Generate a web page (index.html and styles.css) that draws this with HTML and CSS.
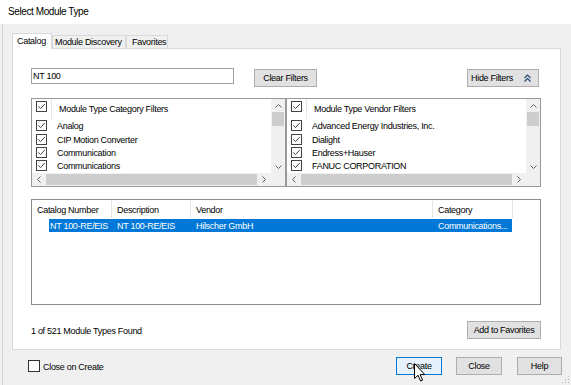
FILE: index.html
```html
<!DOCTYPE html>
<html lang="en">
<head>
    <meta charset="UTF-8">
    <title>Select Module Type</title>
    <link rel="stylesheet" href="styles.css">
</head>
<body>
    <div class="titlebar">Select Module Type</div>
    <div class="client">
        <div class="tabs">
            <div class="tab tab-catalog active">Catalog</div>
            <div class="tab tab-discovery">Module Discovery</div>
            <div class="tab tab-favorites">Favorites</div>
        </div>

        <div class="panel">
            <div class="search-row">
                <input class="search" type="text" value="NT 100">
                <button class="btn btn-clear">Clear Filters</button>
                <button class="btn btn-hide">Hide Filters
                    <svg class="hide-icon" width="7" height="8" viewBox="0 0 7 8"><path d="M0.5 4L3.5 1L6.5 4M0.5 7.5L3.5 4.5L6.5 7.5" fill="none" stroke="#27487a" stroke-width="1.2"/></svg>
                </button>
            </div>

            <div class="filters">
                <div class="filter-box">
                    <div class="filter-main">
                        <div class="filter-list">
                            <div class="filter-head">
                                <svg class="chk head-chk" viewBox="0 0 11 11"><rect x=".5" y=".5" width="10" height="10" fill="#fff" stroke="#444"/><path d="M2.3 5.3L4.5 7.6L8.8 3" fill="none" stroke="#444"/></svg>
                                <span class="sep"></span>
                                <span class="head-label">Module Type Category Filters</span>
                            </div>
                            <div class="filter-item"><svg class="chk" viewBox="0 0 11 11"><rect x=".5" y=".5" width="10" height="10" fill="#fff" stroke="#444"/><path d="M2.3 5.3L4.5 7.6L8.8 3" fill="none" stroke="#444"/></svg><span class="item-label">Analog</span></div>
                            <div class="filter-item"><svg class="chk" viewBox="0 0 11 11"><rect x=".5" y=".5" width="10" height="10" fill="#fff" stroke="#444"/><path d="M2.3 5.3L4.5 7.6L8.8 3" fill="none" stroke="#444"/></svg><span class="item-label">CIP Motion Converter</span></div>
                            <div class="filter-item"><svg class="chk" viewBox="0 0 11 11"><rect x=".5" y=".5" width="10" height="10" fill="#fff" stroke="#444"/><path d="M2.3 5.3L4.5 7.6L8.8 3" fill="none" stroke="#444"/></svg><span class="item-label">Communication</span></div>
                            <div class="filter-item"><svg class="chk" viewBox="0 0 11 11"><rect x=".5" y=".5" width="10" height="10" fill="#fff" stroke="#444"/><path d="M2.3 5.3L4.5 7.6L8.8 3" fill="none" stroke="#444"/></svg><span class="item-label">Communications</span></div>
                        </div>
                        <div class="vscroll">
                            <div class="arrow-btn"><svg width="7" height="4" viewBox="0 0 7 4"><path d="M0.5 3.5L3.5 0.5L6.5 3.5" fill="none" stroke="#606060"/></svg></div>
                            <div class="vthumb"></div>
                            <div class="track"></div>
                            <div class="arrow-btn"><svg width="7" height="4" viewBox="0 0 7 4"><path d="M0.5 0.5L3.5 3.5L6.5 0.5" fill="none" stroke="#606060"/></svg></div>
                        </div>
                    </div>
                    <div class="hscroll">
                        <div class="harrow"><svg width="4" height="7" viewBox="0 0 4 7"><path d="M3.5 0.5L0.5 3.5L3.5 6.5" fill="none" stroke="#606060"/></svg></div>
                        <div class="hthumb"></div>
                        <div class="harrow"><svg width="4" height="7" viewBox="0 0 4 7"><path d="M0.5 0.5L3.5 3.5L0.5 6.5" fill="none" stroke="#606060"/></svg></div>
                        <div class="corner"></div>
                    </div>
                </div>

                <div class="filter-box">
                    <div class="filter-main">
                        <div class="filter-list">
                            <div class="filter-head">
                                <svg class="chk head-chk" viewBox="0 0 11 11"><rect x=".5" y=".5" width="10" height="10" fill="#fff" stroke="#444"/><path d="M2.3 5.3L4.5 7.6L8.8 3" fill="none" stroke="#444"/></svg>
                                <span class="sep"></span>
                                <span class="head-label">Module Type Vendor Filters</span>
                            </div>
                            <div class="filter-item"><svg class="chk" viewBox="0 0 11 11"><rect x=".5" y=".5" width="10" height="10" fill="#fff" stroke="#444"/><path d="M2.3 5.3L4.5 7.6L8.8 3" fill="none" stroke="#444"/></svg><span class="item-label">Advanced Energy Industries, Inc.</span></div>
                            <div class="filter-item"><svg class="chk" viewBox="0 0 11 11"><rect x=".5" y=".5" width="10" height="10" fill="#fff" stroke="#444"/><path d="M2.3 5.3L4.5 7.6L8.8 3" fill="none" stroke="#444"/></svg><span class="item-label">Dialight</span></div>
                            <div class="filter-item"><svg class="chk" viewBox="0 0 11 11"><rect x=".5" y=".5" width="10" height="10" fill="#fff" stroke="#444"/><path d="M2.3 5.3L4.5 7.6L8.8 3" fill="none" stroke="#444"/></svg><span class="item-label">Endress+Hauser</span></div>
                            <div class="filter-item"><svg class="chk" viewBox="0 0 11 11"><rect x=".5" y=".5" width="10" height="10" fill="#fff" stroke="#444"/><path d="M2.3 5.3L4.5 7.6L8.8 3" fill="none" stroke="#444"/></svg><span class="item-label">FANUC CORPORATION</span></div>
                        </div>
                        <div class="vscroll">
                            <div class="arrow-btn"><svg width="7" height="4" viewBox="0 0 7 4"><path d="M0.5 3.5L3.5 0.5L6.5 3.5" fill="none" stroke="#606060"/></svg></div>
                            <div class="vthumb"></div>
                            <div class="track"></div>
                            <div class="arrow-btn"><svg width="7" height="4" viewBox="0 0 7 4"><path d="M0.5 0.5L3.5 3.5L6.5 0.5" fill="none" stroke="#606060"/></svg></div>
                        </div>
                    </div>
                    <div class="hscroll">
                        <div class="harrow"><svg width="4" height="7" viewBox="0 0 4 7"><path d="M3.5 0.5L0.5 3.5L3.5 6.5" fill="none" stroke="#606060"/></svg></div>
                        <div class="hthumb"></div>
                        <div class="harrow"><svg width="4" height="7" viewBox="0 0 4 7"><path d="M0.5 0.5L3.5 3.5L0.5 6.5" fill="none" stroke="#606060"/></svg></div>
                        <div class="corner"></div>
                    </div>
                </div>
            </div>

            <div class="results">
                <div class="res-head">
                    <div class="col col-num">Catalog Number</div>
                    <div class="col col-desc">Description</div>
                    <div class="col col-vendor">Vendor</div>
                    <div class="col col-cat">Category</div>
                </div>
                <div class="res-row selected">
                    <div class="cell cell-num">NT 100-RE/EIS</div>
                    <div class="cell cell-desc">NT 100-RE/EIS</div>
                    <div class="cell cell-vendor">Hilscher GmbH</div>
                    <div class="cell cell-cat">Communications...</div>
                </div>
            </div>

            <div class="status-row">
                <span class="status-text">1 of 521 Module Types Found</span>
                <button class="btn btn-fav">Add to Favorites</button>
            </div>
        </div>

        <div class="footer">
            <span class="chk-lg"></span>
            <span class="chk-label">Close on Create</span>
            <button class="btn btn-create">Create</button>
            <button class="btn btn-close">Close</button>
            <button class="btn btn-help">Help</button>
        </div>
    </div>

    <svg class="cursor" width="12" height="19" viewBox="0 0 12 19"><path d="M0.5 0.5L0.5 15.5L4 12.3L6.6 18L8.6 17.1L6.1 11.6L10.8 11.6Z" fill="#fff" stroke="#000" stroke-linejoin="round"/></svg>
    <svg class="grip" width="8" height="8" viewBox="0 0 8 8"><g fill="#b4b4b4"><rect x="6" y="0" width="1" height="1"/><rect x="3" y="3" width="1" height="1"/><rect x="6" y="3" width="1" height="1"/><rect x="0" y="6" width="1" height="1"/><rect x="3" y="6" width="1" height="1"/><rect x="6" y="6" width="1" height="1"/></g></svg>
</body>
</html>
```

FILE: styles.css
```css
body {
    margin: 0;
    width: 571px;
    height: 385px;
    overflow: hidden;
    position: relative;
    background: #f0f0f0;
    font-family: "Liberation Sans", Arial, sans-serif;
    font-size: 9px;
    letter-spacing: -0.3px;
    color: #000;
}
.titlebar {
    height: 24px;
    line-height: 24px;
    padding-left: 8px;
    background: #fff;
    font-size: 10px;
    letter-spacing: -0.4px;
}
.client {
    height: 361px;
    margin-left: 2px;
    border-left: 1px solid #d6d6d6;
    padding: 9px 9px 0 9px;
    box-sizing: border-box;
}
.tabs {
    display: flex;
    align-items: flex-end;
    height: 15px;
}
.tab {
    box-sizing: border-box;
    height: 13px;
    line-height: 12px;
    border: 1px solid #d9d9d9;
    border-bottom: none;
    background: #f0f0f0;
    white-space: nowrap;
}
.tab.active {
    height: 16px;
    line-height: 14px;
    background: #fff;
    margin-bottom: -1px;
    position: relative;
    z-index: 1;
}
.tab-catalog {
    width: 40px;
    padding-left: 4px;
}
.tab-discovery {
    width: 74px;
    padding-left: 2px;
}
.tab-favorites {
    width: 42px;
    padding-left: 5px;
}
.panel {
    width: 549px;
    height: 302px;
    box-sizing: border-box;
    background: #fff;
    border: 1px solid #d9d9d9;
    padding: 19px 19px 0 18px;
}
.search-row {
    display: flex;
    align-items: flex-start;
    height: 19px;
}
.search {
    width: 203px;
    height: 16px;
    box-sizing: border-box;
    margin: 0;
    padding: 0 0 0 1px;
    border: 1px solid #a0a0a0;
    font: inherit;
    letter-spacing: inherit;
    outline: none;
}
.btn {
    box-sizing: border-box;
    height: 18px;
    margin: 0;
    padding: 0;
    border: 1px solid #adadad;
    background: #e1e1e1;
    font: inherit;
    letter-spacing: inherit;
    color: #000;
    white-space: nowrap;
}
.btn-clear {
    width: 63px;
    margin: 1px 0 0 20px;
}
.btn-hide {
    width: 72px;
    margin: 1px 2px 0 auto;
    padding: 0 7px 0 3px;
    display: flex;
    align-items: center;
}
.hide-icon {
    margin-left: auto;
}
.filters {
    display: flex;
    height: 89px;
    margin-top: 11px;
}
.filter-box {
    width: 255px;
    box-sizing: border-box;
    border: 1px solid #999;
    display: flex;
    flex-direction: column;
}
.filter-main {
    display: flex;
    height: 74px;
}
.filter-list {
    flex: 1;
    overflow: hidden;
    white-space: nowrap;
}
.filter-head {
    display: flex;
    align-items: flex-start;
    height: 20px;
    padding-left: 4px;
}
.chk {
    width: 11px;
    height: 11px;
    flex: none;
}
.head-chk {
    margin-top: 2px;
}
.sep {
    width: 1px;
    height: 20px;
    margin-left: 4px;
    background: #e5e5e5;
}
.head-label {
    margin-left: 7px;
    line-height: 20px;
}
.filter-item {
    display: flex;
    align-items: center;
    height: 13.4px;
    padding-left: 4px;
}
.item-label {
    margin-left: 10px;
    padding-top: 1px;
}
.vscroll {
    width: 14px;
    display: flex;
    flex-direction: column;
    background: #f0f0f0;
}
.arrow-btn {
    height: 13px;
    display: flex;
    align-items: center;
    justify-content: center;
}
.vthumb {
    height: 14px;
    margin: 0 1px;
    background: #cdcdcd;
}
.track {
    flex: 1;
}
.hscroll {
    display: flex;
    height: 13px;
    background: #f0f0f0;
}
.harrow {
    width: 14px;
    display: flex;
    align-items: center;
    justify-content: center;
}
.hthumb {
    width: 211px;
    margin: 1px 0;
    background: #cdcdcd;
}
.corner {
    width: 14px;
}
.results {
    height: 106px;
    margin-top: 12px;
    box-sizing: border-box;
    border: 1px solid #8c8c8c;
}
.res-head {
    display: flex;
    height: 19px;
}
.col {
    box-sizing: border-box;
    height: 18px;
    line-height: 20px;
    padding-left: 5px;
    border-right: 1px solid #e5e5e5;
    white-space: nowrap;
}
.col-num { width: 80px; }
.col-desc { width: 79px; }
.col-vendor { width: 242px; }
.col-cat { width: 80px; }
.res-row {
    display: flex;
    width: 463px;
    height: 13px;
    line-height: 14px;
    margin-left: 17px;
    white-space: nowrap;
}
.res-row.selected {
    background: #0078d7;
    color: #fff;
}
.cell {
    box-sizing: border-box;
    padding-left: 5px;
    overflow: hidden;
}
.cell-num { width: 63px; padding-left: 1px; }
.cell-desc { width: 79px; }
.cell-vendor { width: 242px; }
.cell-cat { width: 79px; }
.status-row {
    display: flex;
    align-items: center;
    height: 18px;
    margin-top: 16px;
}
.status-text {
    padding-top: 2px;
}
.btn-fav {
    width: 74px;
    margin-left: auto;
}
.footer {
    display: flex;
    align-items: center;
    height: 18px;
    margin-top: 7px;
}
.chk-lg {
    width: 12px;
    height: 12px;
    box-sizing: border-box;
    margin-left: 16px;
    border: 1px solid #333;
    background: #fff;
}
.chk-label {
    margin-left: 3px;
    padding-top: 2px;
}
.btn-create {
    width: 46px;
    margin-left: auto;
    background: #e5f1fb;
    border-color: #0078d7;
}
.btn-close {
    width: 46px;
    margin-left: 14px;
}
.btn-help {
    width: 45px;
    margin-left: 15px;
}
.cursor {
    position: absolute;
    left: 414px;
    top: 363px;
}
.grip {
    position: absolute;
    left: 562px;
    top: 376px;
}
```
